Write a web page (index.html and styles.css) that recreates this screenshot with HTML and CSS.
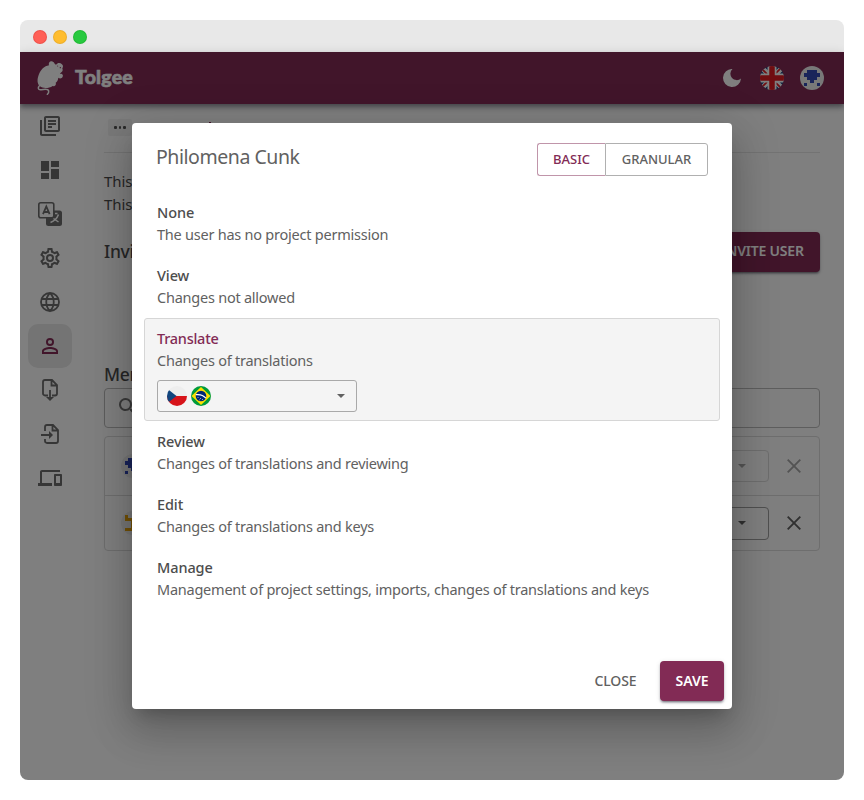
FILE: index.html
```html
<!DOCTYPE html>
<html lang="en">
<head>
<meta charset="utf-8">
<title>Tolgee</title>
<link rel="stylesheet" href="styles.css">
</head>
<body>
<div class="window">
  <div class="titlebar"><i class="dot red"></i><i class="dot yellow"></i><i class="dot green"></i></div>
  <div class="app">
    <header class="appbar">
      <svg class="mouse" viewBox="78 150 84 108"><path fill="#fff" d="M117 166c-3-10 7-15 13-10 3 2 4 5 5 7 2 1 3 1 5 0 3-5 11-5 15-1 5 3 5 9 2 13 2 5 1 10-3 12-2 2-4 3-4 5 5-3 11 2 8 8-2 5-8 7-13 3-1 7-4 13-8 15 3 6-3 12-9 10-12 8-30 8-38 1-9-7-9-21-4-34 6-16 17-27 31-29z"/><path fill="none" stroke="#fff" stroke-width="4.500" stroke-linecap="round" d="M90 225c-8 8-6 16 4 14 9-2 20-4 22 4 1 6-1 8-4 10"/><circle cx="151" cy="173" r="2" fill="#822b55"/><circle cx="143" cy="168" r="1.500" fill="#822b55"/></svg>
      <span class="brand">Tolgee</span>
      <svg class="moon" viewBox="0 0 18 18"><path fill="#fff" d="M9.500 0A9 9 0 1 0 18 9.500 6 6 0 0 1 9.500 0z"/></svg>
      <svg class="round" viewBox="0 0 24 24"><defs><clipPath id="c"><circle cx="12" cy="12" r="12"/></clipPath></defs><g clip-path="url(#c)"><path fill="#174481" d="M0 0h24v24H0z"/><path stroke="#fff" stroke-width="5" d="M0 0l24 24M24 0L0 24"/><path stroke="#e01b22" stroke-width="1.700" d="M0 1l24 24M24 -1L0 23"/><path stroke="#fff" stroke-width="9" d="M12 0v24M0 12h24"/><path stroke="#e01b22" stroke-width="5.500" d="M12 0v24M0 12h24"/></g></svg>
      <svg class="round" viewBox="0 0 24 24"><circle cx="12" cy="12" r="12" fill="#f0f0f0"/><path fill="#3349b5" shape-rendering="crispEdges" d="M7 4h10v3h3v4h-3v3h-3v3h-4v-3H7v-3H4V7h3zM4 17h3v3H4zM17 17h3v3h-3z"/></svg>
    </header>
    <div class="body">
      <nav class="side">
        <a><svg viewBox="0 0 24 24"><path d="M4 6H2v14c0 1.100.9 2 2 2h14v-2H4V6zm16-4H8c-1.100 0-2 .9-2 2v12c0 1.100.9 2 2 2h12c1.100 0 2-.9 2-2V4c0-1.100-.9-2-2-2zm0 14H8V4h12v12zM10 9h8v2h-8zm0 3h4v2h-4zm0-6h8v2h-8z"/></svg></a>
        <a><svg viewBox="0 0 24 24"><path d="M3 13h8V3H3v10zm0 8h8v-6H3v6zm10 0h8V11h-8v10zm0-18v6h8V3h-8z"/></svg></a>
        <a><svg viewBox="0 0 24 24"><rect x="8" y="8.500" width="16" height="15.500" rx="2.500"/><rect class="panel" x=".8" y=".8" width="15" height="15" rx="2"/><path class="line" d="M5 12.200L8.300 4.500 11.600 12.200M6.200 10h4.200"/><path class="cut" d="M17 11.500h2.500M20.500 12.500c-1.500 4-4 6.500-8 8M15.500 16.500l5 3.500"/></svg></a>
        <a><svg viewBox="0 0 24 24"><path d="M19.430 12.980c.04-.32.07-.64.07-.98s-.03-.66-.07-.98l2.110-1.650c.19-.15.240-.42.120-.64l-2-3.460c-.09-.16-.26-.25-.44-.25-.06 0-.12.010-.17.030l-2.490 1c-.52-.4-1.080-.73-1.690-.98l-.38-2.650C14.460 2.180 14.250 2 14 2h-4c-.25 0-.46.180-.49.420l-.38 2.650c-.61.250-1.170.590-1.690.980l-2.490-1c-.06-.02-.12-.03-.18-.03-.17 0-.34.090-.43.250l-2 3.460c-.13.220-.07.490.120.640l2.110 1.650c-.04.320-.07.650-.07.980s.03.660.07.980l-2.110 1.650c-.19.150-.24.420-.12.640l2 3.460c.09.160.26.250.44.250.06 0 .12-.01.17-.03l2.490-1c.52.4 1.080.73 1.690.98l.38 2.650c.03.240.24.420.49.420h4c.25 0 .46-.18.49-.42l.38-2.650c.61-.25 1.170-.59 1.690-.98l2.490 1c.06.020.12.030.18.030.17 0 .34-.09.43-.25l2-3.460c.12-.22.070-.49-.12-.64l-2.110-1.650zm-1.980-1.710c.04.310.05.520.05.730s-.02.430-.05.730l-.14 1.130.89.700 1.080.840-.7 1.210-1.270-.51-1.040-.42-.9.680c-.43.320-.84.560-1.250.730l-1.060.430-.16 1.130-.2 1.350h-1.400l-.19-1.350-.16-1.130-1.060-.43c-.43-.18-.83-.41-1.230-.71l-.91-.7-1.060.430-1.270.51-.7-1.210 1.080-.84.890-.7-.14-1.130c-.03-.31-.05-.54-.05-.74s.02-.43.050-.73l.14-1.130-.89-.7-1.080-.84.7-1.210 1.270.51 1.040.42.900-.68c.43-.32.84-.56 1.250-.73l1.060-.43.160-1.130.2-1.350h1.390l.19 1.350.16 1.130 1.060.43c.43.180.83.410 1.230.71l.91.700 1.060-.43 1.270-.51.700 1.210-1.070.85-.89.700.14 1.130zM12 8a4 4 0 1 0 0 8 4 4 0 0 0 0-8zm0 6a2 2 0 1 1 0-4 2 2 0 0 1 0 4z"/></svg></a>
        <a><svg viewBox="0 0 24 24"><path class="line" d="M12 3a9 9 0 1 0 0 18 9 9 0 0 0 0-18zM12 3c-5 5-5 13 0 18 5-5 5-13 0-18M3.500 9h17M3.500 15h17"/></svg></a>
        <a class="active"><svg viewBox="0 0 24 24"><path d="M12 5.900a2.100 2.100 0 1 1 0 4.200 2.100 2.100 0 0 1 0-4.200m0 9c2.970 0 6.100 1.460 6.100 2.100v1.100H5.900V17c0-.64 3.130-2.100 6.100-2.100M12 4a4 4 0 1 0 0 8 4 4 0 0 0 0-8zm0 9c-2.670 0-8 1.340-8 4v3h16v-3c0-2.660-5.330-4-8-4z"/></svg></a>
        <a><svg viewBox="0 0 24 24"><path class="line" d="M10 17.500H7c-1 0-2-.8-2-2V4c0-1.200.8-2 2-2h7l5 5v8.500c0 1.200-.8 2-2 2h-3M13.500 2v5.500H19M12 12v8"/><path d="M8 19h8l-4 4z"/></svg></a>
        <a><svg viewBox="0 0 24 24"><path class="line" d="M7 9V5c0-1.200.8-2 2-2h6l5 5v11c0 1.200-.8 2-2 2H9c-1.200 0-2-.8-2-2v-2M14.500 3v5.500H20M3 13h9"/><path d="M11 9l4 4-4 4z"/></svg></a>
        <a><svg viewBox="0 0 24 24"><path d="M4 6h18V4H4c-1.100 0-2 .9-2 2v11H0v3h14v-3H4V6zm19 2h-6c-.55 0-1 .45-1 1v10c0 .55.450 1 1 1h6c.55 0 1-.45 1-1V9c0-.55-.45-1-1-1zm-1 9h-4v-7h4v7z"/></svg></a>
      </nav>
      <main class="content">
        <div class="crumbs"><span class="chip"><i></i><i></i><i></i></span><i class="crumbmark"></i></div>
        <p class="intro">This<br>This</p>
        <div class="invite"><h2>Invitations</h2><button class="primary">INVITE USER</button></div>
        <h2 class="members">Members</h2>
        <div class="search"><svg viewBox="0 0 24 24"><path d="M15.500 14h-.79l-.28-.27A6.500 6.500 0 1 0 13.730 14.430l.27.280v.79l5 4.990L20.490 19zm-6 0a4.500 4.500 0 1 1 0-9 4.500 4.500 0 0 1 0 9z"/></svg></div>
        <div class="list">
          <div class="row disabled"><svg class="avatar" viewBox="0 0 24 24"><circle cx="12" cy="12" r="12" fill="#eee"/><path fill="#3349b5" shape-rendering="crispEdges" d="M7 4h10v3h3v4h-3v3h-3v3h-4v-3H7v-3H4V7h3zM4 17h3v3H4zM17 17h3v3h-3z"/></svg><span class="rowselect"><i class="caret"></i></span><svg class="x" viewBox="0 0 14 14"><path d="M.7.7l12.600 12.600M13.300.7L.7 13.300"/></svg></div>
          <div class="row"><svg class="avatar" viewBox="0 0 24 24"><circle cx="12" cy="12" r="12" fill="#eee"/><path fill="#e8a50c" shape-rendering="crispEdges" d="M4 4h3v3h10V4h3v6h-3v4h3v6H4v-3h6v-7H4z"/></svg><span class="rowselect"><i class="caret"></i></span><svg class="x" viewBox="0 0 14 14"><path d="M.7.7l12.600 12.600M13.300.7L.7 13.300"/></svg></div>
        </div>
      </main>
    </div>
    <div class="backdrop">
      <section class="dialog">
        <div class="head"><h1>Philomena Cunk</h1><div class="toggle"><button class="on">BASIC</button><button>GRANULAR</button></div></div>
        <div class="options">
          <div class="option"><h3>None</h3><p>The user has no project permission</p></div>
          <div class="option"><h3>View</h3><p>Changes not allowed</p></div>
          <div class="option selected"><h3>Translate</h3><p>Changes of translations</p>
            <div class="langs">
              <svg viewBox="0 0 20 20"><defs><clipPath id="f"><circle cx="10" cy="10" r="10"/></clipPath></defs><g clip-path="url(#f)"><path fill="#eee" d="M0 0h20v10H0z"/><path fill="#d7141a" d="M0 10h20v10H0z"/><path fill="#11457e" d="M0 2.500L9.500 10 0 17.500z"/></g></svg>
              <svg viewBox="0 0 20 20"><g clip-path="url(#f)"><path fill="#009b3a" d="M0 0h20v20H0z"/><path fill="#fedf00" d="M10 1l9.500 9-9.500 9L.5 10z"/><circle cx="10" cy="10" r="5.300" fill="#002776"/><path fill="none" stroke="#fff" stroke-width="1.200" d="M4.900 8.700c4-.5 7.500.5 10 3.500"/><path fill="#8fa3c4" d="M6.500 11h1v1h-1zM9 12h1v1H9zM11 13h1v1h-1zM8 13.500h1v.8H8z"/></g></svg>
              <i class="caret"></i>
            </div>
          </div>
          <div class="option"><h3>Review</h3><p>Changes of translations and reviewing</p></div>
          <div class="option"><h3>Edit</h3><p>Changes of translations and keys</p></div>
          <div class="option"><h3>Manage</h3><p>Management of project settings, imports, changes of translations and keys</p></div>
        </div>
        <div class="actions"><button class="close">CLOSE</button><button class="primary save">SAVE</button></div>
      </section>
    </div>
  </div>
</div>
</body>
</html>
```
FILE: styles.css
```css
* { box-sizing: border-box; }
body { margin: 0; padding: 20px; background: #fff; color: #4d4d4d; font: 14.5px/22px "Noto Sans", sans-serif; letter-spacing: -.235px; }
h1, h2, h3, p { margin: 0; font-weight: 400; }
button { font: 500 13px/20px "Noto Sans", sans-serif; letter-spacing: 0; border: 0; background: none; padding: 0 0 1px; color: #616161; white-space: nowrap; }
.window { width: 824px; height: 760px; border-radius: 8px; overflow: hidden; display: flex; flex-direction: column; }
.titlebar { height: 32px; background: #e8e8e8; display: flex; align-items: center; gap: 6px; padding: 2px 0 0 13px; }
.dot { width: 14px; height: 14px; border-radius: 50%; border: 1px solid #e0443e80; }
.red { background: #ff5f56; }
.yellow { background: #ffbd2e; border-color: #dea12380; }
.green { background: #27c93f; border-color: #1aab2980; }
.app { flex: 1; position: relative; background: #fff; display: flex; flex-direction: column; }
.appbar { height: 52px; background: #822b55; box-shadow: 0 2px 4px -1px #0003, 0 4px 5px #0024, 0 1px 10px #0000001f; display: flex; align-items: center; padding: 0 20px 0 16px; position: relative; }
.mouse { width: 28px; height: 36px; margin-bottom: 1px; }
.brand { color: #fff; font: 900 19.5px/24px Lato, sans-serif; letter-spacing: .2px; margin: 0 auto 2px 11px; -webkit-text-stroke: .6px #fff; }
.moon { width: 18px; height: 18px; margin-right: 19px; }
.round { width: 24px; height: 24px; }
.round + .round { margin-left: 16px; }
.body { flex: 1; display: flex; }
.side { width: 60px; display: flex; flex-direction: column; align-items: center; }
.side a { width: 44px; height: 44px; border-radius: 10px; display: grid; place-items: center; color: #6c6c6c; }
.side svg { width: 24px; height: 24px; fill: currentColor; }
.side .line { fill: none; stroke: currentColor; stroke-width: 1.8; }
.side .panel { fill: #fff; stroke: currentColor; stroke-width: 1.6; }
.side .cut { fill: none; stroke: #fff; stroke-width: 1.5; }
.side .active { background: #e8e8e8; color: #822b55; }
.content { padding: 0 24px; flex: 1; }
.crumbs { height: 49px; border-bottom: 1px solid #e6e6e6; padding: 15px 4px; display: flex; align-items: flex-start; }
.chip { width: 24px; height: 17px; background: #f3f3f3; border-radius: 2px; display: flex; gap: 2px; align-items: center; justify-content: center; }
.chip i { width: 2.5px; height: 2.5px; background: #555; border-radius: 1px; }
.crumbmark { width: 2px; height: 4px; margin: 3px 0 0 77px; background: #822b55; }
.intro { font-size: 15px; letter-spacing: -.1px; line-height: 23px; margin-top: 17px; height: 46px; color: #4d4d4d; }
.invite { display: flex; justify-content: space-between; align-items: center; margin-top: 16px; height: 40px; }
h2 { font-size: 17.5px; line-height: 26px; font-weight: 500; color: #4d4d4d; letter-spacing: -.3px; }
.primary { background: #822b55; color: #fff; font-weight: 600; border-radius: 4px; height: 40px; box-shadow: 0 3px 1px -2px #0003, 0 2px 2px #0024, 0 1px 5px #0000001f; }
.invite .primary { width: 110px; font-size: 14px; letter-spacing: -.2px; padding: 0 5px 2px 0; }
.invite h2 { margin-bottom: 2px; }
.members { margin-top: 89px; }
.search { height: 40px; border: 1px solid #bcbcbc; border-radius: 4px; padding: 6px 11px; margin-top: 1px; }
.search svg { width: 24px; fill: #757575; }
.list { margin-top: 8px; border: 1px solid #dcdcdc; border-radius: 4px; height: 115px; }
.row { height: 58px; display: flex; align-items: center; padding: 0 18px 0 16px; }
.row + .row { border-top: 1px solid #dcdcdc; height: 55px; }
.avatar { width: 24px; }
.rowselect { width: 120px; height: 33px; border: 1px solid #a0a0a0; border-radius: 4px; margin-left: auto; margin-right: 18px; display: flex; align-items: center; justify-content: flex-end; padding-right: 22px; }
.caret { border: 4.5px solid transparent; border-top-color: #616161; border-bottom: 0; }
.x { width: 14px; height: 14px; stroke: #616161; stroke-width: 1.9; }
.disabled .rowselect { border-color: #ddd; height: 32px; }
.disabled .caret, .disabled .x { opacity: .55; }
.backdrop { position: absolute; inset: 0; background: #00000080; display: flex; justify-content: center; padding-top: 71px; }
.dialog { width: 600px; height: 586px; border-radius: 4px; background: #fff; box-shadow: 0 11px 15px -7px #0003, 0 24px 38px 3px #00000024, 0 9px 46px 8px #0000001f; display: flex; flex-direction: column; }
.head { padding: 20px 24px 0; height: 69px; display: flex; justify-content: space-between; align-items: flex-start; }
h1 { font-size: 19.5px; line-height: 28px; color: #616161; letter-spacing: -.45px; }
.toggle { display: flex; height: 33px; }
.toggle button { width: 103px; border: 1px solid #b0b0b0; border-radius: 0 3px 3px 0; }
.toggle .on { width: 68px; color: #822b55; border-color: #c095aa; border-right: 0; border-radius: 3px 0 0 3px; }
.options { padding: 0 12px; flex: 1; color: #616161; }
.option { height: 63px; padding: 9px 13px 0; white-space: nowrap; }
.option h3 { font-size: 14.5px; line-height: 22px; font-weight: 500; color: #4d4d4d; letter-spacing: -.1px; }
.option.selected { height: 103px; padding: 8px 12px 0; background: #f4f4f4; border: 1px solid #d6d6d6; border-radius: 3px; }
.option.selected h3 { color: #822b55; letter-spacing: -.25px; }
.langs { width: 200px; height: 32px; border: 1px solid #a9a9a9; border-radius: 3px; margin-top: 9px; display: flex; gap: 4px; align-items: center; padding: 0 11px 0 9px; }
.langs svg { width: 20px; height: 20px; }
.langs .caret { margin-left: auto; }
.actions { padding: 8px; display: flex; justify-content: flex-end; gap: 8px; }
.actions button { height: 40px; font-size: 14px; letter-spacing: -.1px; }
.close { width: 73px; }
.save { width: 64px; }
```
